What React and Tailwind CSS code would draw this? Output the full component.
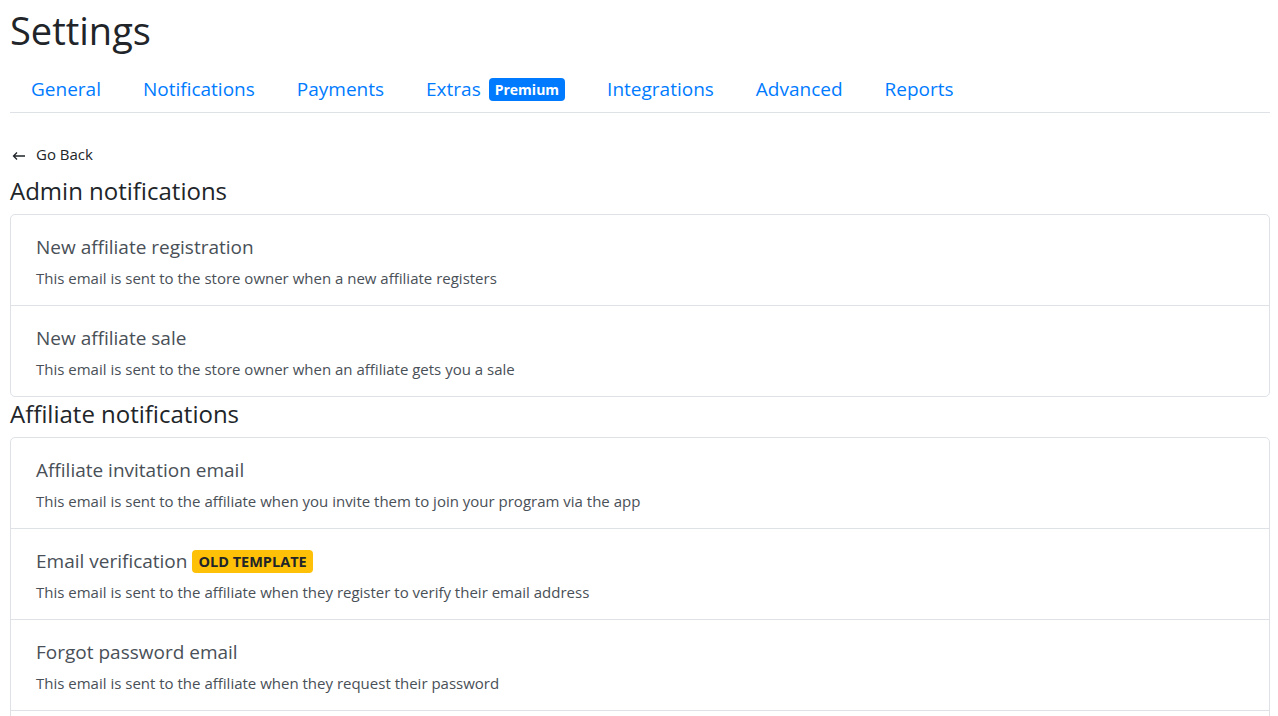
import React from 'react'

const tabs = [
  { label: 'General' },
  { label: 'Notifications' },
  { label: 'Payments' },
  { label: 'Extras', badge: 'Premium' },
  { label: 'Integrations' },
  { label: 'Advanced' },
  { label: 'Reports' },
]

const sections = [
  {
    title: 'Admin notifications',
    items: [
      { name: 'New affiliate registration', desc: 'This email is sent to the store owner when a new affiliate registers' },
      { name: 'New affiliate sale', desc: 'This email is sent to the store owner when an affiliate gets you a sale' },
    ],
  },
  {
    title: 'Affiliate notifications',
    items: [
      { name: 'Affiliate invitation email', desc: 'This email is sent to the affiliate when you invite them to join your program via the app' },
      { name: 'Email verification', old: true, desc: 'This email is sent to the affiliate when they register to verify their email address' },
      { name: 'Forgot password email', desc: 'This email is sent to the affiliate when they request their password' },
      { name: 'Affiliate approved email', desc: 'This email is sent to the affiliate when their account is approved' },
    ],
  },
]

export default function App() {
  return (
    <div className="min-h-screen bg-white pl-[10px] pr-[8px] text-[#212529]" style={{ fontFamily: '"Open Sans", "Noto Sans", sans-serif' }}>
      <h1 className="pt-[6px] text-[38px] leading-[48px] font-normal">Settings</h1>

      <nav className="mt-[12px] flex items-center border-b border-[#dee2e6]">
        {tabs.map(t => (
          <a key={t.label} className="flex h-[46px] items-center px-[21px] text-[19px] text-[#007bff] cursor-pointer">
            {t.label}
            {t.badge && (
              <span className="ml-[8px] rounded-[4px] bg-[#007bff] px-[6px] py-[1px] text-[14px] font-bold leading-[21px] text-white">
                {t.badge}
              </span>
            )}
          </a>
        ))}
      </nav>

      <div className="flex flex-col">
        <div className="mt-[29px] mb-[8px] flex items-center gap-[10px] text-[15px] leading-[24px]">
          <svg width="14" height="10" viewBox="0 0 14 10" fill="none" stroke="#212529" strokeWidth="1.3" className="ml-[2px] mt-[3px]">
            <path d="M13 5H1.5M5 1.5L1.5 5L5 8.5" />
          </svg>
          <span>Go Back</span>
        </div>

        {sections.map(s => (
          <div key={s.title} className="flex flex-col">
            <h2 className="mt-[2px] text-[24px] leading-[29px]">{s.title}</h2>
            <div className="mt-[9px] rounded-[5px] border border-[#dee2e6]">
              {s.items.map((it, i) => (
                <div key={it.name} className={`px-[25px] pt-[18px] pb-[16px] ${i > 0 ? 'border-t border-[#dee2e6]' : ''}`}>
                  <div className="flex items-center gap-[5px] text-[19px] leading-[28px] text-[#495057]">
                    {it.name}
                    {it.old && (
                      <span className="rounded-[4px] bg-[#ffc107] px-[6px] text-[14.5px] font-bold leading-[23px] text-[#212529]">
                        OLD TEMPLATE
                      </span>
                    )}
                  </div>
                  <p className="mt-[6px] text-[15px] leading-[22px] text-[#495057]">{it.desc}</p>
                </div>
              ))}
            </div>
          </div>
        ))}
      </div>
    </div>
  )
}
